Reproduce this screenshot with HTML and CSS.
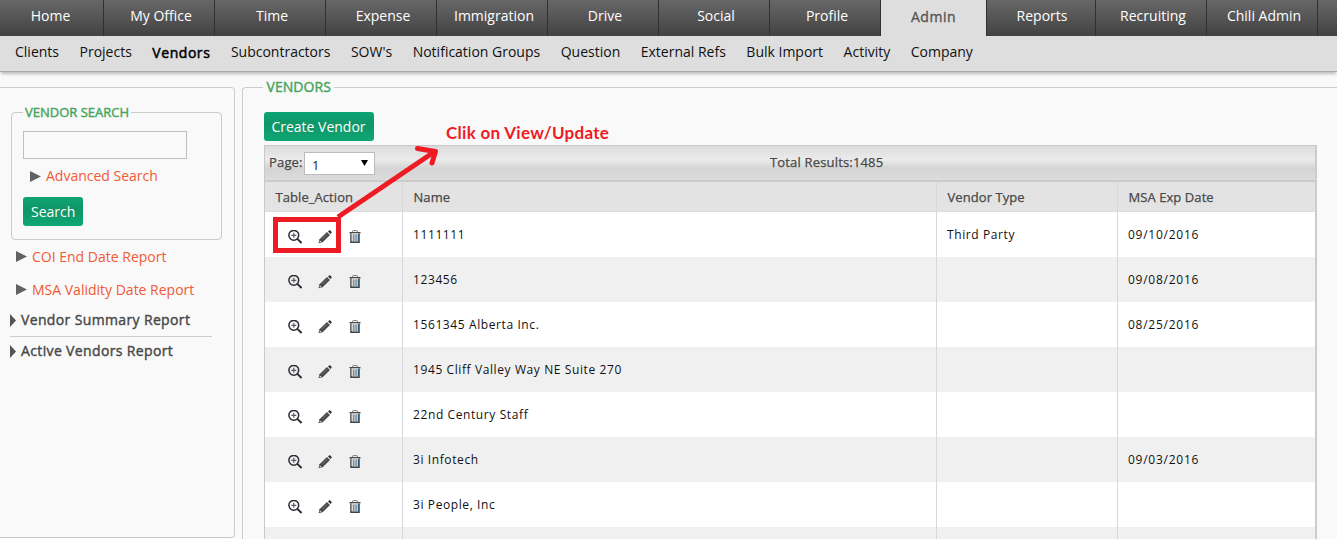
FILE: index.html
```html
<!DOCTYPE html>
<html lang="en">
<head>
<meta charset="utf-8">
<title>Vendors</title>
<link rel="stylesheet" href="styles.css">
</head>
<body>
<nav class="tabs">
<a class="tab first">Home</a><a class="tab">My Office</a><a class="tab">Time</a><a class="tab">Expense</a><a class="tab">Immigration</a><a class="tab">Drive</a><a class="tab">Social</a><a class="tab">Profile</a><a class="tab active">Admin</a><a class="tab reports">Reports</a><a class="tab">Recruiting</a><a class="tab">Chili Admin</a><a class="tab rest"></a>
</nav>
<nav class="subnav"><a>Clients</a><a>Projects</a><a class="current">Vendors</a><a>Subcontractors</a><a>SOW's</a><a>Notification Groups</a><a>Question</a><a>External Refs</a><a>Bulk Import</a><a>Activity</a><a>Company</a></nav>
<div class="page">
<aside class="sidebar">
<fieldset class="search">
<legend>VENDOR SEARCH</legend>
<input class="query" type="text" aria-label="Vendor">
<a class="link advanced"><svg class="tri" viewBox="0 0 11 11"><path d="M0 0L11 5.5L0 11Z"/></svg>Advanced Search</a>
<button class="button">Search</button>
</fieldset>
<a class="link"><svg class="tri" viewBox="0 0 11 11"><path d="M0 0L11 5.5L0 11Z"/></svg>COI End Date Report</a>
<a class="link second"><svg class="tri" viewBox="0 0 11 11"><path d="M0 0L11 5.5L0 11Z"/></svg>MSA Validity Date Report</a>
<a class="section"><svg class="caret" viewBox="0 0 6 13"><path d="M0 0L6 6.5L0 13Z"/></svg>Vendor Summary Report</a>
<a class="section last"><svg class="caret" viewBox="0 0 6 13"><path d="M0 0L6 6.5L0 13Z"/></svg>Active Vendors Report</a>
</aside>
<fieldset class="vendors">
<legend>VENDORS</legend>
<button class="button create">Create Vendor</button>
<div class="grid">
<div class="pager"><span class="page-label">Page:</span><span class="select">1<svg viewBox="0 0 7 6"><path d="M0 0H7L3.5 6Z"/></svg></span><span class="total">Total Results:1485</span></div>
<div class="row head"><span>Table_Action</span><span>Name</span><span>Vendor Type</span><span>MSA Exp Date</span></div>
<div id="rows"></div>
</div>
</fieldset>
</div>
<div class="note">Clik on View/Update</div>
<svg class="markup" viewBox="0 0 1337 539"><rect x="275.5" y="219.500" width="63" height="31"/><path d="M338 217L434 152"/><path class="arrowhead" d="M417.500 148.500L435.500 151.500L432 163"/></svg>
<svg width="0" height="0" class="defs"><defs>
<g id="zoom"><circle cx="5.800" cy="5.300" r="4.900" fill="none" stroke="#292e33" stroke-width="1.500"/><path d="M9.300 8.900L13.600 13" stroke="#292e33" stroke-width="2"/><path d="M3.300 5.300H8.300M5.800 2.800V7.800" stroke="#625762" stroke-width="1.200"/></g>
<g id="edit"><path d="M1.500 9.300L9 2L12 5L4.600 12.200L0.500 13.300Z" fill="#494949"/><path d="M10 1.500L11.300 0.300Q12 0 12.700 0.800L13.500 1.700Q14 2.400 13.400 3L12.500 4Z" fill="#333"/><path d="M1.900 10.400L3.600 12L1.600 12.300Z" fill="#eee"/><path d="M4 9.200L9.200 4.200" stroke="#888" stroke-width=".7"/></g>
<g id="trash"><path d="M4.500 2V1.300Q4.500 .6 5.500 .6H8.500Q9.500 .6 9.500 1.300V2" fill="none" stroke="#777"/><path d="M1.500 2.700H12.500" stroke="#4c4944" stroke-width="1.400"/><path d="M3 3.500V12.200H11V3.500" fill="#d5d8d8" stroke="#39434b" stroke-width="1.500"/><path d="M3.500 4V11" stroke="#c78f2c" stroke-width="1"/><path d="M10.500 4V11" stroke="#315f7d" stroke-width="1"/><path d="M5.500 4.500V11M7.100 4.500V11M8.700 4.500V11" stroke="#68798a" stroke-width=".8"/></g>
</defs></svg>
<script src="app.js"></script>
</body>
</html>
```
FILE: styles.css
```css
* { box-sizing: border-box; }
html, body { height: 100%; overflow: hidden; }
body { margin: 0; background: #f9f9f9; font: 14px/20px "Open Sans", sans-serif; color: #111; }
.tabs { display: flex; height: 36px; background: #dedede; }
.tab { flex: 0 0 111px; height: 36px; padding: 6px 0 0 4px; text-align: center; color: #fff; background: linear-gradient(#676767, #424242); border-right: 1px solid #303030; }
.tab.first { flex-basis: 104px; padding-left: 0; padding-right: 2px; }
.tab.active { flex-basis: 106px; padding: 7px 0 0; background: #dedede; color: #555; -webkit-text-stroke: .35px #555; letter-spacing: .5px; }
.tab.reports { flex-basis: 109px; padding-left: 2px; }
.tab.rest { flex: 1; border: 0; }
.subnav { position: relative; display: flex; gap: 20.500px; height: 36px; padding: 6px 15px 0; background: #dedede; border-bottom: 1px solid #aaa; box-shadow: 0 3px 3px -1px #bbb; white-space: nowrap; }
.subnav .current { padding-top: 1px; color: #000; -webkit-text-stroke: .5px #000; letter-spacing: .55px; }
.page { display: flex; gap: 7px; height: 467px; overflow: hidden; }
.sidebar { flex: 0 0 235px; height: 451px; margin-top: 15px; border: 1px solid #ccc; border-left: 0; border-radius: 0 4px 4px 0; padding: 15px 12px 0 11px; }
fieldset { margin: 0; min-width: 0; border: 1px solid #ccc; border-radius: 4px; }
legend { color: #45a45a; -webkit-text-stroke: .4px #45a45a; }
.search { height: 137px; padding: 0 11px; }
.search legend { padding: 0 2px; font-size: 13px; line-height: 18px; letter-spacing: 0; }
.query { display: block; width: 164px; height: 28px; margin-top: 10px; border: 1px solid #bfbfbf; background: #f9f9f9; }
.link { display: flex; align-items: center; gap: 5px; height: 33px; margin-left: 5px; color: #f05a35; white-space: nowrap; }
.tri { width: 11px; height: 11px; fill: #626262; }
.advanced { margin: 1px 0 0 7px; height: 32px; }
.button { display: block; height: 29px; border: 0; border-radius: 3px; padding: 0 8px 1px; font: 14px "Open Sans", sans-serif; color: #fff; background: linear-gradient(#0ca474, #109567 45%, #0ea875); }
.search .button { margin-top: 5px; width: 60px; }
.section { display: flex; align-items: center; gap: 5px; margin-left: -1px; width: 202px; height: 31px; padding-bottom: 2px; border-bottom: 1px solid #ccc; color: #484848; -webkit-text-stroke: .4px #484848; letter-spacing: .36px; white-space: nowrap; }
.section.last { height: 28px; border: 0; padding: 0; }
.caret { width: 6px; height: 13px; fill: #555; }
.vendors { flex: 1; height: 462px; margin-top: 5px; padding: 0 20px 0 21px; border-width: 1px 0 0 1px; border-radius: 4px 0 0 0; }
.vendors legend { padding: 0 3px; margin-left: -1px; text-indent: .5px; letter-spacing: .05px; }
.create { width: 110px; margin: 15px 0 4px; padding: 0 1px 1px 0; }
.grid { width: 1053px; height: 394px; overflow: hidden; border: 1px solid #c9c9c9; border-right: 2px solid #ccc; border-bottom: 0; }
.pager { display: flex; height: 36px; background: linear-gradient(#dcdcdc, #ebebeb 40%, #d4d4d4 67%, #dcdcdc); border-bottom: 2px solid #cbcbcb; font-size: 13px; letter-spacing: .17px; color: #484848; -webkit-text-stroke: .25px #484848; }
.page-label { width: 39px; padding: 6px 0 0 4px; }
.select { display: flex; justify-content: space-between; width: 71px; height: 23px; margin-top: 6px; padding: 2px 6px 0 7px; background: #fff; border: 1px solid #bbb; color: #222; -webkit-text-stroke: 0; }
.select svg { width: 7px; height: 6px; margin-top: 5px; }
.total { margin-left: 395px; padding-top: 6px; }
.row { display: grid; grid-template-columns: 137px 534px 181px 1fr; height: 45px; background: #fff; font-size: 12px; letter-spacing: .6px; }
.row:nth-child(even) { background: #f0f0f0; }
.row:last-child { height: 12px; }
.row > * { padding: 13px 0 0 10px; border-left: 1px solid #d8d8d8; }
.row > :nth-child(4) { letter-spacing: .75px; }
.row > :first-child { border-left: 0; }
.row.head { height: 30px; background: #e3e3e3; border-bottom: 1px solid #ddd; font-size: 13px; color: #484848; -webkit-text-stroke: .25px #484848; }
.head > * { padding: 5px 0 0 10.500px; letter-spacing: .07px !important; }
.row > .actions { display: flex; gap: 16px; height: 32px; padding: 18px 0 0 23px; }
.row:last-child > * { height: 12px; padding: 0; }
.actions svg { width: 14px; height: 14px; }
.note { position: absolute; left: 446px; top: 123px; font: bold 17px/20px Lato, sans-serif; letter-spacing: .3px; color: #ed1c24; white-space: nowrap; }
.markup { position: absolute; inset: 0; width: 1337px; height: 539px; pointer-events: none; fill: none; stroke: #ed1c24; stroke-width: 5; }
.markup .arrowhead { stroke-linecap: round; stroke-linejoin: round; }
.defs { position: absolute; }
```
FILE: app.js
```js
const vendors = [
  ["1111111", "Third Party", "09/10/2016"],
  ["123456", "", "09/08/2016"],
  ["1561345 Alberta Inc.", "", "08/25/2016"],
  ["1945 Cliff Valley Way NE Suite 270", "", ""],
  ["22nd Century Staff", "", ""],
  ["3i Infotech", "", "09/03/2016"],
  ["3i People, Inc", "", ""],
  null
];
const icons = ["zoom", "edit", "trash"]
  .map(name => `<svg viewBox="0 0 14 14"><use href="#${name}"/></svg>`).join("");
document.getElementById("rows").innerHTML = vendors.map(vendor =>
  `<div class="row"><span class="actions">${vendor ? icons : ""}</span>` +
  (vendor || ["", "", ""]).map(text => `<span>${text}</span>`).join("") + `</div>`
).join("");
```
